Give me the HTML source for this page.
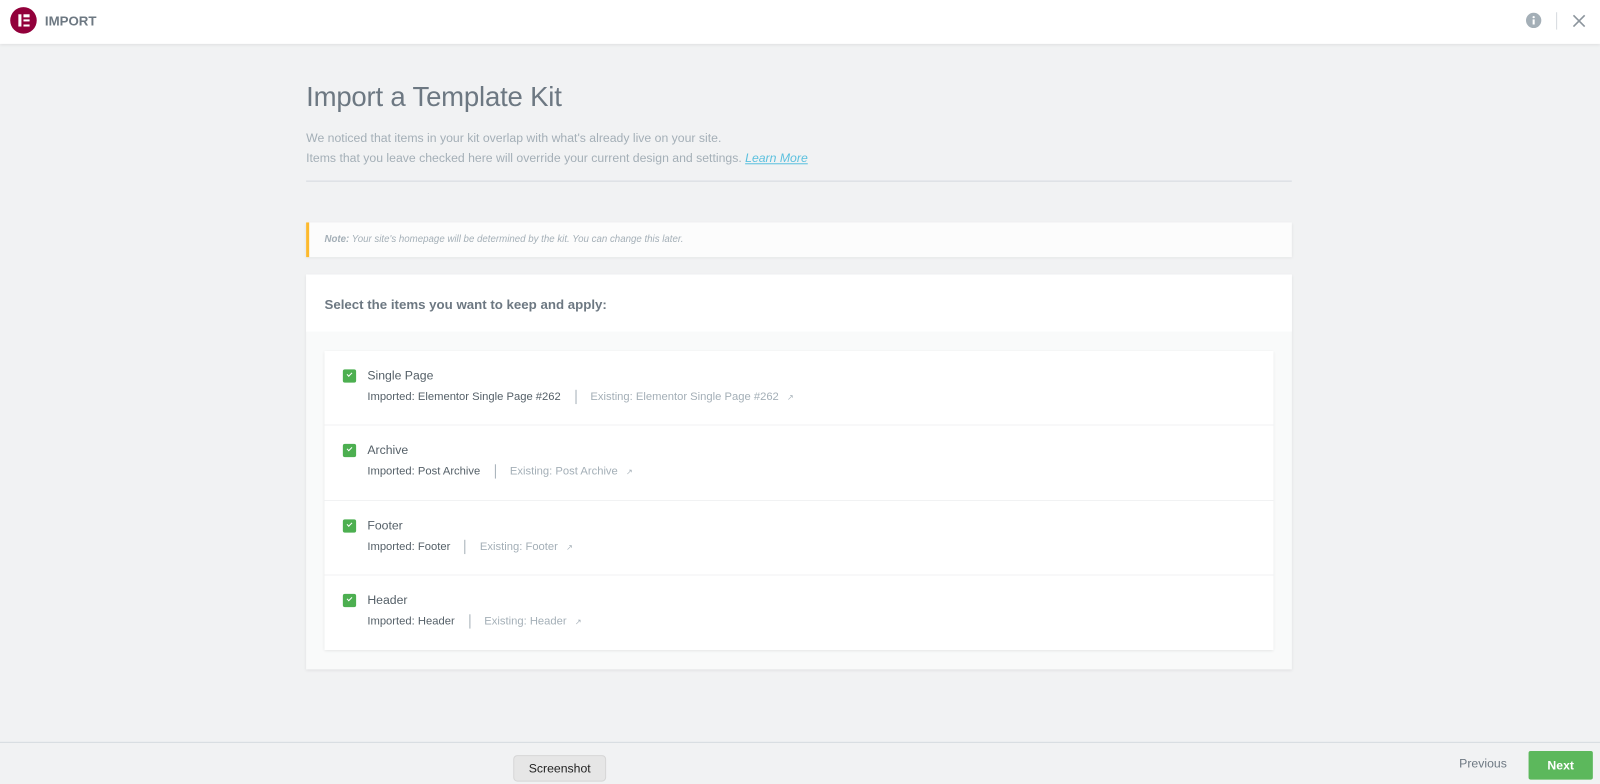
<!DOCTYPE html>
<html><head><meta charset="utf-8"><style>
*{box-sizing:border-box;margin:0;padding:0}
html,body{width:1600px;height:784px;overflow:hidden;background:#f1f2f3}
#w{position:absolute;left:0;top:0;width:1568px;height:768px;transform:scale(1.0204);transform-origin:0 0;font-family:"Liberation Sans",sans-serif;color:#6d7882}
.top{position:absolute;left:0;top:0;width:1568px;height:43px;background:#fff;box-shadow:0 1px 3px rgba(0,0,0,.08)}
.logo{position:absolute;left:10px;top:7px;width:26px;height:26px;border-radius:50%;background:#92003b}
.logo i{position:absolute;background:#fff}
.ttl{position:absolute;left:44px;top:13px;font-size:13px;font-weight:bold;color:#6d7882}
h1{position:absolute;left:300px;top:80px;font-size:27px;font-weight:normal;color:#6d7882;letter-spacing:-.2px}
.desc{position:absolute;left:300px;top:125px;font-size:12px;line-height:20px;color:#a4afb7}
.desc a{color:#5bc0de;font-style:italic;text-decoration:underline}
.hr{position:absolute;left:300px;top:177px;width:966px;height:1px;background:#d5dadf}
.note{position:absolute;left:300px;top:218px;width:966px;height:34px;background:#fcfcfc;border-left:3px solid #fcb92c;box-shadow:0 1px 3px rgba(0,0,0,.08);font-size:9.5px;font-style:italic;color:#a4afb7;padding:11px 0 0 15px}
.panel{position:absolute;left:300px;top:269px;width:966px;height:387px;background:#f9fafa;box-shadow:0 1px 3px rgba(0,0,0,.08)}
.ph{height:56px;background:#fff;font-size:13px;font-weight:bold;color:#6d7882;padding:22px 0 0 18px}
.card{position:absolute;left:18px;top:75px;width:930px;height:293px;background:#fff;box-shadow:0 1px 3px rgba(0,0,0,.1)}
.row{height:73.3px;border-bottom:1px solid #f1f2f3;position:relative}
.row:last-child{border:0}
.cb{position:absolute;left:18px;top:18px;width:13px;height:13px;border-radius:2px;background:#4caf50}
.cb:after{content:"";position:absolute;left:4px;top:3px;width:4px;height:2px;border-left:1.5px solid #fff;border-bottom:1.5px solid #fff;transform:rotate(-45deg)}
.nm{position:absolute;left:42px;top:17px;font-size:12px;color:#556068}
.sub{position:absolute;left:42px;top:38px;font-size:11px;color:#556068;white-space:nowrap}
.sub .sep{display:inline-block;width:1px;height:14px;background:#a4afb7;vertical-align:middle;margin:0 14px 0 14px}
.sub .ex{color:#a4afb7}
.sub .lk{font-size:8px;color:#a4afb7;margin-left:8px}
.foot{position:absolute;left:0;top:727px;width:1568px;height:1px;background:#d5dadf}
.prev{position:absolute;left:1430px;top:741px;font-size:12px;color:#6d7882}
.next{position:absolute;left:1498px;top:736px;width:63px;height:28px;background:#5cb85c;color:#fff;font-size:12px;font-weight:bold;text-align:center;line-height:28px;border-radius:2px}
.shot{position:absolute;left:503px;top:740px;width:91px;height:26px;background:#e6e6e6;border:1px solid #d6d6d6;border-radius:4px;font-size:12px;color:#222;text-align:center;line-height:24px}
</style></head><body><div id="w">
<div class="top">
<div class="logo"><i style="left:8px;top:7px;width:2.5px;height:12px"></i><i style="left:12.5px;top:7px;width:6px;height:2.5px"></i><i style="left:12.5px;top:11.7px;width:6px;height:2.5px"></i><i style="left:12.5px;top:16.5px;width:6px;height:2.5px"></i></div>
<div class="ttl">IMPORT</div>
<svg style="position:absolute;left:1495px;top:12px" width="16" height="16" viewBox="0 0 16 16"><circle cx="8" cy="8" r="7.5" fill="#a4afb7"/><rect x="7" y="7" width="2" height="5" fill="#fff"/><circle cx="8" cy="4.8" r="1.1" fill="#fff"/></svg>
<div style="position:absolute;left:1525px;top:12px;width:1px;height:17px;background:#d5dadf"></div>
<svg style="position:absolute;left:1541px;top:14px" width="13" height="13" viewBox="0 0 13 13"><path d="M1 1L12 12M12 1L1 12" stroke="#8c959d" stroke-width="1.6"/></svg>
</div>
<h1>Import a Template Kit</h1>
<div class="desc">We noticed that items in your kit overlap with what's already live on your site.<br>Items that you leave checked here will override your current design and settings. <a>Learn More</a></div>
<div class="hr"></div>
<div class="note"><b>Note:</b> Your site's homepage will be determined by the kit. You can change this later.</div>
<div class="panel"><div class="ph">Select the items you want to keep and apply:</div>
<div class="card">
<div class="row"><div class="cb"></div><div class="nm">Single Page</div><div class="sub">Imported: Elementor Single Page #262<span class="sep"></span><span class="ex">Existing: Elementor Single Page #262</span><span class="lk">↗</span></div></div>
<div class="row"><div class="cb"></div><div class="nm">Archive</div><div class="sub">Imported: Post Archive<span class="sep"></span><span class="ex">Existing: Post Archive</span><span class="lk">↗</span></div></div>
<div class="row"><div class="cb"></div><div class="nm">Footer</div><div class="sub">Imported: Footer<span class="sep"></span><span class="ex">Existing: Footer</span><span class="lk">↗</span></div></div>
<div class="row"><div class="cb"></div><div class="nm">Header</div><div class="sub">Imported: Header<span class="sep"></span><span class="ex">Existing: Header</span><span class="lk">↗</span></div></div>
</div></div>
<div class="foot"></div>
<div class="shot">Screenshot</div>
<div class="prev">Previous</div>
<div class="next">Next</div>
</div></body></html>
